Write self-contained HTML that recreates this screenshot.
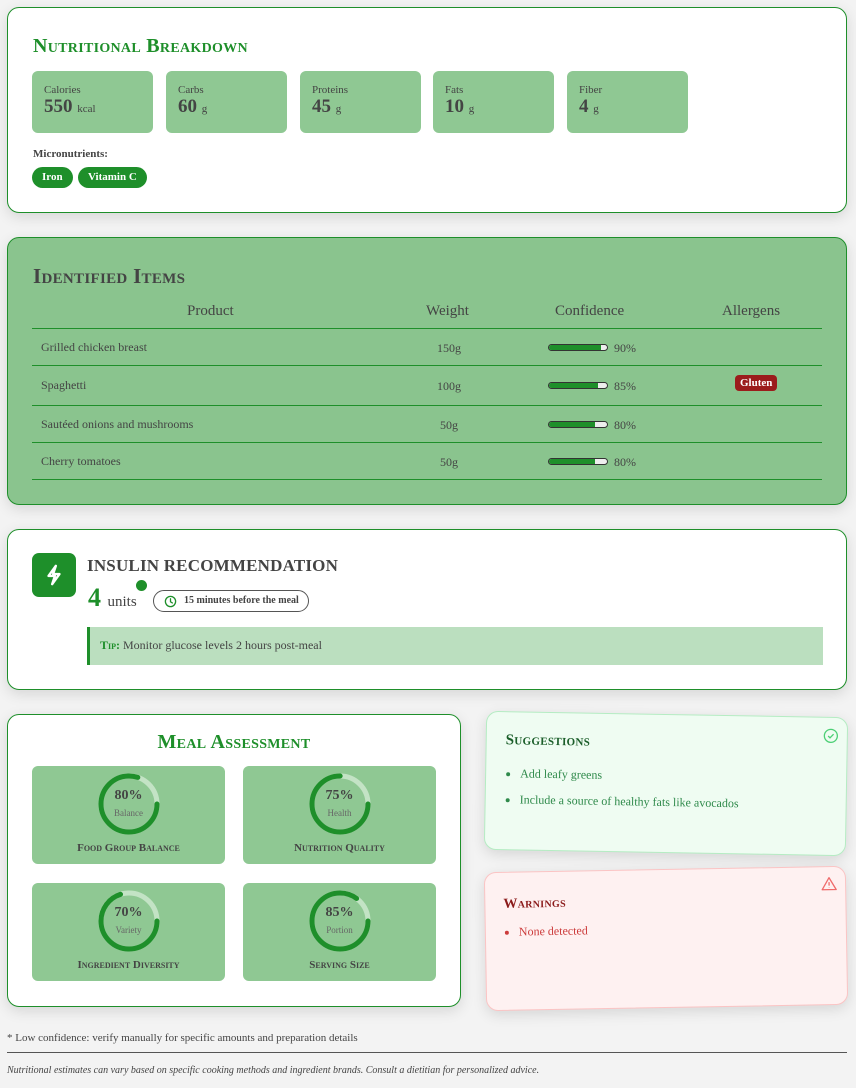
<!DOCTYPE html>
<html><head><meta charset="utf-8"><style>
*{box-sizing:border-box;margin:0;padding:0}
body{width:856px;height:1088px;background:#f3f3f3;font-family:"Liberation Serif",serif;color:#444;position:relative;overflow:hidden}
.card{position:absolute;border:1px solid #1e8f2a;border-radius:12px;box-shadow:0 4px 14px rgba(0,0,0,.12)}
.h{font-variant:small-caps;font-weight:bold;letter-spacing:.3px}
.stat{position:absolute;top:63px;width:121px;height:62px;background:#8fc893;border-radius:6px;padding:13px 12px}
.stat .l{font-size:11px;color:#444}
.stat .v{font-size:19px;font-weight:bold;color:#444;margin-top:0px}
.stat .v span{font-size:11px;font-weight:normal}
.pill{position:absolute;top:159px;height:21px;line-height:21px;background:#1e8f2a;color:#fff;border-radius:11px;font-size:11px;font-weight:bold;padding:0 10px}
.row{position:absolute;left:24px;width:790px;border-bottom:1px solid #1e8f2a;font-size:12px}
.row span{position:absolute}
.bar{position:absolute;left:516px;width:60px;height:7px;border:1px solid #333;border-radius:4px;background:#eee;overflow:hidden}
.bar i{display:block;height:100%;background:#1e8f2a}
.tile{position:absolute;width:193px;height:98px;background:#8fc893;border-radius:6px;text-align:center}
.tile svg{position:absolute;left:66px;top:7px}
.tile .p{position:absolute;left:0;right:0;top:22px;font-size:14px;font-weight:bold;color:#444}
.tile .s{position:absolute;left:0;right:0;top:42px;font-size:9px;color:#666}
.tile .t{position:absolute;left:0;right:0;top:76px;font-size:11px;font-weight:bold;font-variant:small-caps;color:#444}
</style></head><body>

<div class="card" style="left:7px;top:7px;width:840px;height:206px;background:#fff">
 <div class="h" style="position:absolute;left:25px;top:27px;font-size:20px;color:#1e8f2a">Nutritional Breakdown</div>
 <div class="stat" style="left:24px"><div class="l">Calories</div><div class="v">550 <span>kcal</span></div></div>
 <div class="stat" style="left:158px"><div class="l">Carbs</div><div class="v">60 <span>g</span></div></div>
 <div class="stat" style="left:292px"><div class="l">Proteins</div><div class="v">45 <span>g</span></div></div>
 <div class="stat" style="left:425px"><div class="l">Fats</div><div class="v">10 <span>g</span></div></div>
 <div class="stat" style="left:559px"><div class="l">Fiber</div><div class="v">4 <span>g</span></div></div>
 <div style="position:absolute;left:25px;top:140px;font-size:11px;font-weight:bold;color:#444">Micronutrients:</div>
 <div class="pill" style="left:24px">Iron</div>
 <div class="pill" style="left:70px">Vitamin C</div>
</div>

<div class="card" style="left:7px;top:237px;width:840px;height:268px;background:#8ac48e">
 <div class="h" style="position:absolute;left:25px;top:26px;font-size:21px;color:#444">Identified Items</div>
 <div class="row" style="top:56px;height:35px;font-size:15px">
  <span style="left:155px;top:9px">Product</span><span style="left:394px;top:9px">Weight</span><span style="left:523px;top:9px">Confidence</span><span style="left:690px;top:9px">Allergens</span>
 </div>
 <div class="row" style="top:91px;height:37px"><span style="left:9px;top:11px">Grilled chicken breast</span><span style="left:405px;top:12px">150g</span><div class="bar" style="top:15px"><i style="width:90%"></i></div><span style="left:582px;top:12px">90%</span></div>
 <div class="row" style="top:128px;height:40px"><span style="left:9px;top:12px">Spaghetti</span><span style="left:405px;top:13px">100g</span><div class="bar" style="top:16px"><i style="width:85%"></i></div><span style="left:582px;top:13px">85%</span><span style="left:703px;top:9px;background:#9b1c1c;color:#fff;border-radius:4px;padding:2px 5px;font-size:11px;font-weight:bold">Gluten</span></div>
 <div class="row" style="top:168px;height:37px"><span style="left:9px;top:11px">Sautéed onions and mushrooms</span><span style="left:408px;top:12px">50g</span><div class="bar" style="top:15px"><i style="width:80%"></i></div><span style="left:582px;top:12px">80%</span></div>
 <div class="row" style="top:205px;height:37px"><span style="left:9px;top:11px">Cherry tomatoes</span><span style="left:408px;top:12px">50g</span><div class="bar" style="top:15px"><i style="width:80%"></i></div><span style="left:582px;top:12px">80%</span></div>
</div>

<div class="card" style="left:7px;top:529px;width:840px;height:161px;background:#fff">
 <div style="position:absolute;left:24px;top:23px;width:44px;height:44px;background:#1e8f2a;border-radius:7px">
  <svg width="44" height="44" viewBox="0 0 24 24" style="position:absolute;left:0;top:0"><path d="M13 7 L9 12.5 H12.5 L11 17 L15 11.5 H11.5 Z" fill="none" stroke="#fff" stroke-width="1.3" stroke-linejoin="round"/></svg>
 </div>
 <div style="position:absolute;left:79px;top:26px;font-size:17px;font-weight:bold;color:#444;letter-spacing:.2px">INSULIN RECOMMENDATION</div>
 <div style="position:absolute;left:128px;top:50px;width:11px;height:11px;border-radius:50%;background:#1e8f2a"></div>
 <div style="position:absolute;left:80px;top:53px;font-size:26px;font-weight:bold;color:#1e8f2a">4 <span style="font-size:15px;font-weight:normal;color:#444">units</span></div>
 <div style="position:absolute;left:145px;top:60px;height:22px;line-height:20px;border:1px solid #555;border-radius:11px;padding:0 9px 0 30px;font-size:10px;font-weight:bold;color:#444">
  <svg width="13" height="13" viewBox="0 0 14 14" style="position:absolute;left:10px;top:4px"><circle cx="7" cy="7" r="5.5" fill="none" stroke="#1e8f2a" stroke-width="1.4"/><path d="M7 4V7.3L9 8.5" fill="none" stroke="#1e8f2a" stroke-width="1.4" stroke-linecap="round"/></svg>15 minutes before the meal</div>
 <div style="position:absolute;left:79px;top:97px;width:736px;height:38px;background:#bbdfbf;border-left:3px solid #1e8f2a;padding:11px 0 0 10px;font-size:12px;color:#444"><b style="font-variant:small-caps;color:#1e8f2a">Tip:</b> Monitor glucose levels 2 hours post-meal</div>
</div>

<div class="card" style="left:7px;top:714px;width:454px;height:293px;background:#fff">
 <div class="h" style="position:absolute;left:0;right:0;top:16px;text-align:center;font-size:20px;color:#1e8f2a">Meal Assessment</div>
 <div class="tile" style="left:24px;top:51px"><svg width="62" height="62"><circle cx="31" cy="31" r="28" fill="none" stroke="#c3e3c5" stroke-width="5"/><circle cx="31" cy="31" r="28" fill="none" stroke="#1e8f2a" stroke-width="5" stroke-dasharray="140.7 200" stroke-linecap="round"/></svg><div class="p">80%</div><div class="s">Balance</div><div class="t">Food Group Balance</div></div>
 <div class="tile" style="left:235px;top:51px"><svg width="62" height="62"><circle cx="31" cy="31" r="28" fill="none" stroke="#c3e3c5" stroke-width="5"/><circle cx="31" cy="31" r="28" fill="none" stroke="#1e8f2a" stroke-width="5" stroke-dasharray="131.9 200" stroke-linecap="round"/></svg><div class="p">75%</div><div class="s">Health</div><div class="t">Nutrition Quality</div></div>
 <div class="tile" style="left:24px;top:168px"><svg width="62" height="62"><circle cx="31" cy="31" r="28" fill="none" stroke="#c3e3c5" stroke-width="5"/><circle cx="31" cy="31" r="28" fill="none" stroke="#1e8f2a" stroke-width="5" stroke-dasharray="123.1 200" stroke-linecap="round"/></svg><div class="p">70%</div><div class="s">Variety</div><div class="t">Ingredient Diversity</div></div>
 <div class="tile" style="left:235px;top:168px"><svg width="62" height="62"><circle cx="31" cy="31" r="28" fill="none" stroke="#c3e3c5" stroke-width="5"/><circle cx="31" cy="31" r="28" fill="none" stroke="#1e8f2a" stroke-width="5" stroke-dasharray="149.5 200" stroke-linecap="round"/></svg><div class="p">85%</div><div class="s">Portion</div><div class="t">Serving Size</div></div>
</div>

<div class="card" style="left:485px;top:714px;width:362px;height:139px;background:#effcf2;border-color:#b5ecc3;transform:rotate(1deg)">
 <svg width="16" height="16" viewBox="0 0 16 16" style="position:absolute;right:8px;top:10px"><circle cx="8" cy="8" r="6.5" fill="none" stroke="#4ccf75" stroke-width="1.3"/><path d="M5.3 8.2L7.2 10 10.7 6.3" fill="none" stroke="#4ccf75" stroke-width="1.3"/></svg>
 <div class="h" style="position:absolute;left:19px;top:20px;font-size:15px;color:#1b5e2a">Suggestions</div>
 <ul style="position:absolute;left:34px;top:48px;font-size:12px;color:#2f8a4b;line-height:26px">
  <li>Add leafy greens</li><li>Include a source of healthy fats like avocados</li></ul>
</div>

<div class="card" style="left:485px;top:869px;width:362px;height:139px;background:#fef1f1;border-color:#fbc4c4;transform:rotate(-1deg)">
 <svg width="16" height="15" viewBox="0 0 16 15" style="position:absolute;right:8px;top:9px"><path d="M8 1.5L15 13.5H1Z" fill="none" stroke="#ef6b6b" stroke-width="1.3" stroke-linejoin="round"/><path d="M8 6V9.5M8 11.2V11.6" stroke="#ef6b6b" stroke-width="1.3"/></svg>
 <div class="h" style="position:absolute;left:18px;top:24px;font-size:14px;color:#8b1a1a">Warnings</div>
 <ul style="position:absolute;left:33px;top:52px;font-size:12px;color:#cc3b3b">
  <li>None detected</li></ul>
</div>

<div style="position:absolute;left:7px;top:1032px;font-size:11px;color:#444">* Low confidence: verify manually for specific amounts and preparation details</div>
<div style="position:absolute;left:7px;top:1052px;width:840px;border-top:1px solid #555"></div>
<div style="position:absolute;left:7px;top:1065px;font-size:10px;font-style:italic;color:#444">Nutritional estimates can vary based on specific cooking methods and ingredient brands. Consult a dietitian for personalized advice.</div>
</body></html>
